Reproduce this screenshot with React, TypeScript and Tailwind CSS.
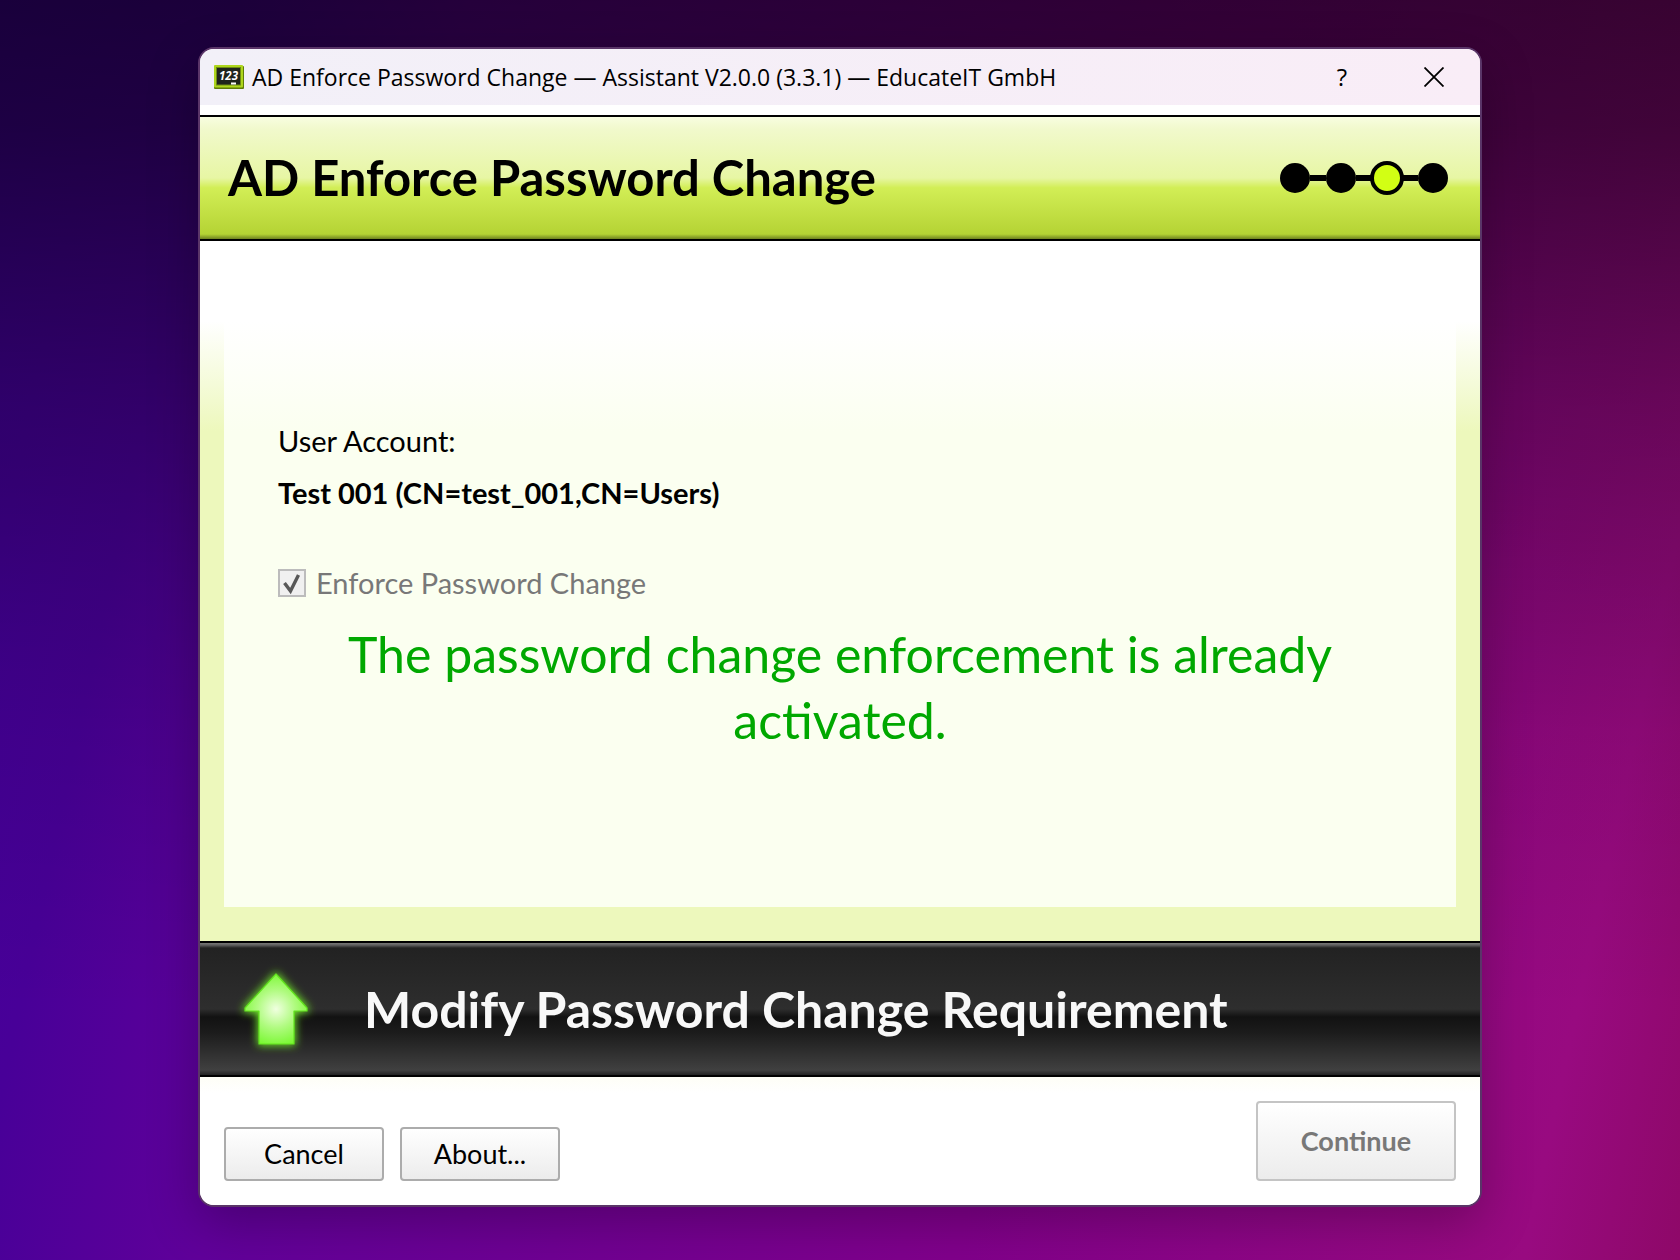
import React from 'react';

const steps = [
  { label: 'Welcome', active: false },
  { label: 'User', active: false },
  { label: 'Modify', active: true },
  { label: 'Finish', active: false },
];

const App: React.FC = () => {
  return (
    <div className="min-h-screen flex flex-col px-6 pt-[47px] pb-[53px] font-['Lato',sans-serif] text-black bg-[linear-gradient(#0000009e_0%,#00000090_10%,#00000050_32%,#00000018_58%,#00000000_80%),linear-gradient(102deg,#42009c_0%,#480098_12%,#60009a_24%,#7e008c_60%,#980a80_92%,#8e0868_100%)]">
      <main className="w-full max-w-[1284px] mx-auto flex-1 flex flex-col rounded-2xl border-2 border-[#5a3568] bg-white overflow-hidden shadow-[0_16px_50px_rgba(0,0,0,0.25)]">
        <TitleBar />
        <Header />
        <Content />
        <ModeBanner />
        <Footer />
      </main>
    </div>
  );
};

const TitleBar = () => (
  <div className="h-14 shrink-0 flex items-center pl-3.5 bg-linear-to-r from-[#f2f0f8] to-[#f9edf7] font-['Open_Sans',sans-serif]">
    <BoardIcon />
    <h1 className="flex-1 ml-2 text-[23px] whitespace-nowrap">
      AD Enforce Password Change — Assistant V2.0.0 (3.3.1) — EducateIT GmbH
    </h1>
    <button className="w-[92px] h-14 text-2xl">?</button>
    <button className="w-[92px] h-14 flex items-center justify-center" aria-label="Close">
      <svg className="w-5 h-5" viewBox="0 0 20 20" fill="none" stroke="black" strokeWidth="1.8">
        <path d="M0.5 0.5 L19.5 19.5 M19.5 0.5 L0.5 19.5" />
      </svg>
    </button>
  </div>
);

const Header = () => (
  <header className="mt-2.5 h-[126px] shrink-0 flex items-center justify-between pl-7 pr-8 border-y-2 border-black bg-[linear-gradient(#f8fde0_0%,#f1f9cc_10%,#e7f6a4_50%,#d2ee56_58%,#b5d334_96%,#6f8220_100%)]">
    <h2 className="text-[49px] font-bold">AD Enforce Password Change</h2>
    <ol className="flex items-center">
      {steps.map((step, i) => (
        <li key={step.label} className="flex items-center" aria-label={step.label}>
          {i > 0 && <span className="w-4 h-1.5 bg-black" />}
          {step.active ? (
            <span className="w-[34px] h-[34px] -mx-0.5 rounded-full border-4 border-black bg-[#d2ff14]" />
          ) : (
            <span className="w-[30px] h-[30px] rounded-full bg-black" />
          )}
        </li>
      ))}
    </ol>
  </header>
);

const Content = () => (
  <section className="flex-1 flex flex-col px-6 pb-[34px] bg-[linear-gradient(#ffffff_80px,#edf8bc_190px)]">
    <div className="flex-1 pt-44 px-[54px] text-[29px] leading-[48px] bg-[linear-gradient(#ffffff_80px,#fbfff0_190px)]">
      <p>User Account:</p>
      <p className="mt-1 font-bold">Test 001 (CN=test_001,CN=Users)</p>
      <label className="mt-[42px] flex items-center gap-2.5 text-[#787878]">
        <span className="relative flex">
          <input
            type="checkbox"
            checked
            disabled
            className="w-7 h-7 appearance-none border-2 border-[#bcbcbc] bg-[#f0f0f0]"
          />
          <CheckMark />
        </span>
        Enforce Password Change
      </label>
      <p className="mt-3.5 text-[50px] leading-[66px] text-center text-[#00a800]">
        The password change enforcement is already activated.
      </p>
    </div>
  </section>
);

const ModeBanner = () => (
  <div className="h-[136px] shrink-0 flex items-center pl-7 gap-10 border-y-2 border-black text-[#f8f8f8] bg-[linear-gradient(#787878_0px,#606060_2px,#222222_5px,#2e2e2e_66px,#121212_74px,#1c1c1c_90px,#404040_127px,#222222_132px)]">
    <ArrowIcon />
    <h2 className="text-[50px] font-bold whitespace-nowrap">Modify Password Change Requirement</h2>
  </div>
);

const Footer = () => (
  <footer className="shrink-0 flex items-end gap-4 px-6 pt-6 pb-6 text-[27px] bg-[linear-gradient(#fefef6_0px,#ffffff_16px)]">
    <button className="w-40 h-[54px] rounded-sm border-2 border-[#acacac] bg-linear-to-b from-white to-[#ececec]">
      Cancel
    </button>
    <button className="w-40 h-[54px] rounded-sm border-2 border-[#acacac] bg-linear-to-b from-white to-[#ececec]">
      About...
    </button>
    <button
      disabled
      className="ml-auto w-[200px] h-20 rounded-sm border-2 border-[#c4c4c4] bg-linear-to-b from-white to-[#ececec] font-bold text-[#787878]"
    >
      Continue
    </button>
  </footer>
);

const CheckMark = () => (
  <svg className="absolute inset-0 w-7 h-7" viewBox="0 0 28 28" fill="none" stroke="#585858" strokeWidth="3.4">
    <path d="M6.5 14 L12.5 22 L20.5 6" />
  </svg>
);

// small blackboard with a green frame
const BoardIcon = () => (
  <svg className="w-[30px] h-6 shrink-0" viewBox="0 0 30 24">
    <rect y="1" width="30" height="23" rx="1" fill="#5f7d08" />
    <rect width="29" height="22.5" rx="1" fill="#aed61c" />
    <rect x="2.5" y="2.5" width="24" height="17.5" fill="#1f241c" stroke="#6d8a14" />
    <text x="14.5" y="14.5" fontSize="11.5" fontStyle="italic" fontWeight="bold" textAnchor="middle" fill="white">
      123
    </text>
    <rect x="17" y="17.5" width="5" height="2" fill="white" />
  </svg>
);

const ArrowIcon = () => (
  <svg className="w-24 h-24 shrink-0" viewBox="0 0 96 96">
    <defs>
      <radialGradient id="arrowFill" gradientUnits="userSpaceOnUse" cx="48" cy="48" r="38">
        <stop offset="0" stopColor="#f0ffe0" />
        <stop offset="0.5" stopColor="#b0fb80" />
        <stop offset="1" stopColor="#78f830" />
      </radialGradient>
      <filter id="arrowGlow" x="-50%" y="-50%" width="200%" height="200%">
        <feGaussianBlur stdDeviation="4.5" />
      </filter>
    </defs>
    <path d="M48 13 L79 47 V50 H66 V83 H31 V50 H17 V47 Z" fill="#70e828" stroke="#70e828" strokeWidth="3" filter="url(#arrowGlow)" />
    <path d="M48 13 L79 47 V50 H66 V83 H31 V50 H17 V47 Z" fill="url(#arrowFill)" stroke="#62e41e" strokeWidth="1.2" strokeLinejoin="round" />
  </svg>
);

export default App;
